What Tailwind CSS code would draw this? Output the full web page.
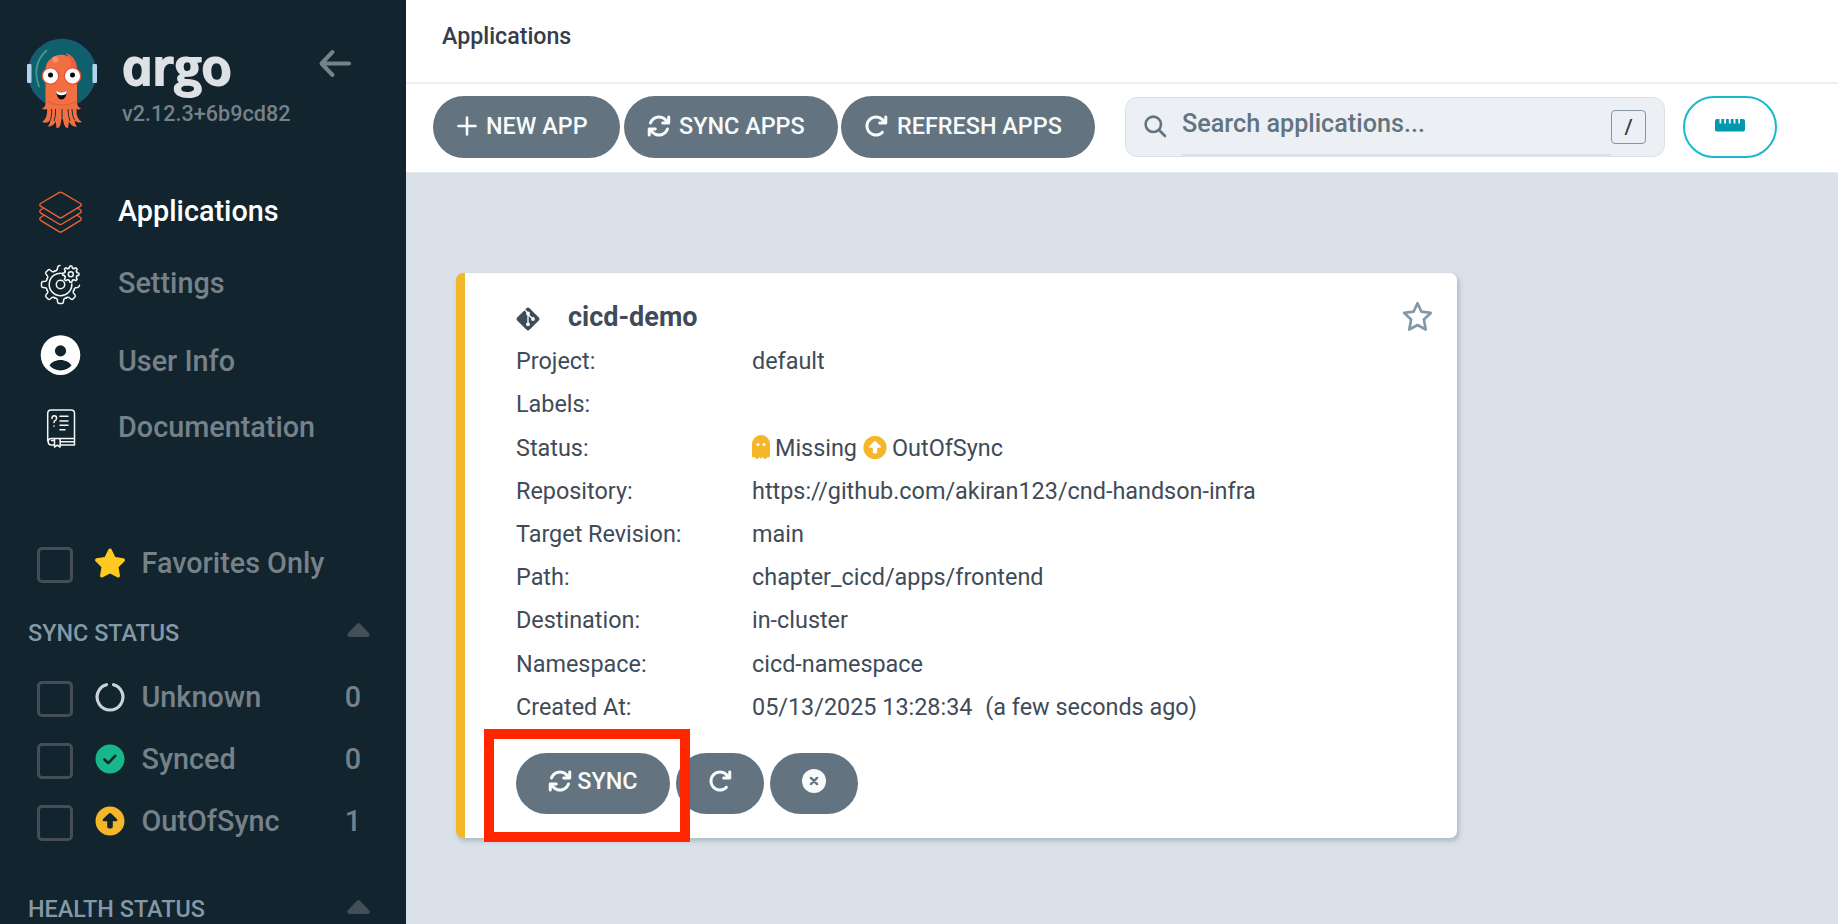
<!DOCTYPE html>
<html lang="en">
<head>
<meta charset="utf-8">
<title>Applications - Argo CD</title>
<script src="https://cdn.jsdelivr.net/npm/@tailwindcss/browser@4"></script>
</head>
<body class="w-[1838px] h-[924px] overflow-hidden flex font-['Roboto',sans-serif] bg-[#dae1e8]">
<svg class="hidden">
  <defs>
    <symbol id="sync" viewBox="0 0 512 512"><path fill="currentColor" d="M105.1 202.6c7.700-21.800 20.200-42.300 37.800-59.800c62.500-62.500 163.800-62.500 226.300 0L386.300 160H336c-17.700 0-32 14.300-32 32s14.300 32 32 32H463.500h.4c17.700 0 32-14.300 32-32V64c0-17.700-14.300-32-32-32s-32 14.300-32 32v51.200L414.400 97.600c-87.500-87.500-229.300-87.500-316.800 0C73.200 122 55.600 150.700 44.800 181.400c-5.900 16.700 2.900 34.900 19.500 40.800s34.900-2.900 40.800-19.500zM39 289.300c-5 1.500-9.800 4.200-13.700 8.200c-4 4-6.700 8.800-8.100 14c-.3 1.200-.6 2.500-.8 3.800c-.3 1.700-.4 3.400-.4 5.100V448c0 17.700 14.300 32 32 32s32-14.300 32-32V396.900l17.600 17.500c87.500 87.400 229.300 87.400 316.700 0c24.400-24.400 42.100-53.100 52.900-83.700c5.900-16.700-2.900-34.900-19.500-40.800s-34.900 2.900-40.800 19.500c-7.700 21.800-20.200 42.300-37.800 59.800c-62.500 62.500-163.800 62.500-226.300 0l-.1-.1L125.600 352H176c17.700 0 32-14.300 32-32s-14.300-32-32-32H48.400c-1.600 0-3.200.1-4.800.3s-3.100.5-4.600 1z"/></symbol>
    <symbol id="refresh" viewBox="0 0 512 512"><path fill="currentColor" d="M386.300 160H336c-17.700 0-32 14.300-32 32s14.300 32 32 32H464c17.700 0 32-14.300 32-32V64c0-17.700-14.300-32-32-32s-32 14.300-32 32v51.200L414.400 97.600c-87.500-87.500-229.300-87.500-316.800 0s-87.500 229.300 0 316.800s229.300 87.500 316.800 0c12.500-12.500 12.500-32.800 0-45.300s-32.800-12.500-45.300 0c-62.500 62.500-163.800 62.500-226.300 0s-62.500-163.800 0-226.300s163.800-62.500 226.300 0L386.300 160z"/></symbol>
    <symbol id="up" viewBox="0 0 30 30"><path fill="#f4b72a" fill-rule="evenodd" d="M15 .5a14.500 14.500 0 1 0 0 29a14.500 14.500 0 0 0 0-29zM15 7q.8 0 1.500.7l5.400 5.400q.7.800.4 1.500q-.3.700-1.200.7H17.800v5.200q0 1.900-1.900 1.900h-1.800q-1.900 0-1.900-1.900v-5.200H8.900q-.9 0-1.200-.7q-.3-.7.400-1.500l5.400-5.400q.7-.7 1.500-.7z"/></symbol>
    <path id="tooth" vector-effect="non-scaling-stroke" d="M-5.700-13.700C-4.700-13.200-3.500-14-3.200-15.200L-2.900-17.600Q-2.700-19-1.400-19H1.400Q2.700-19 2.900-17.600L3.200-15.200C3.500-14 4.700-13.200 5.700-13.700"/>
  </defs>
</svg>

<aside class="w-[406px] h-full shrink-0 bg-[#12242d] flex flex-col text-[28.800px] font-medium text-[#76818a]">
  <div class="h-[176px] shrink-0 flex">
    <svg class="mt-[36px] ml-[26px] w-[72px] h-[96px] shrink-0" viewBox="26 36 72 96">
      <circle cx="62" cy="73" r="33.500" fill="#0e606a" stroke="#24557d" stroke-width="1.500"/>
      <rect x="27" y="64" width="4.500" height="19" rx="1" fill="#b4d3ea"/><rect x="92.500" y="64" width="4.500" height="19" rx="1" fill="#b4d3ea"/>
      <path d="M46.500 50.500Q31 65 39 86.500" fill="none" stroke="#459698" stroke-width="1.800" stroke-linecap="round"/>
      <path d="M45.500 68a16 16 0 0 1 31.500 0V102q0 5 4 6.500q-2 1.500-4.500.5q-.5 10 5.500 13q-4 1.500-7.500-1.500q0 3 2.500 6q-5 1-8-5l-1 6.500q-3 0-4-4l-2-8l-1.500 8.500q-1 4-4 3.500l-.8-6.500q-3 5.500-8 5q2.500-2.500 2.700-6q-4 3.500-8.400 1.500q6-4 5-13q-3 1-5-.5q4-1.500 3.500-6.500z" fill="#f16f41"/>
      <path d="M66 54Q75 60 68 80L77 78V68Q76 56 66 53z" fill="#ec5f3c"/>
      <path d="M51.500 109q1 8-2.500 13.500M55.500 109q.5 7-1.500 12M68 109q0 7 2 12M72 109q0 7 2.500 11M62 109v8" stroke="#12242d" stroke-width=".9" fill="none"/>
      <path d="M47 101.500q15 7 30 0" stroke="#da5d3c" stroke-width="1" fill="none"/>
      <circle cx="55.500" cy="59.500" r="3" fill="#f79274"/>
      <circle cx="50.500" cy="76" r="8.200" fill="#fff" stroke="#e8503a" stroke-width="1.300"/><circle cx="72.500" cy="76" r="8.200" fill="#fff" stroke="#e8503a" stroke-width="1.300"/>
      <circle cx="50.500" cy="75" r="2.500" fill="#090909"/><circle cx="72.500" cy="75" r="2.500" fill="#090909"/>
      <path d="M56 90.500q5.500 4 11 0q-.7 9-5.500 9t-5.500-9z" fill="#0d0d0d"/><path d="M56 90.500q5.500 4 11 0l-.7 3.200q-4.800 3-9.500 0z" fill="#fff"/>
    </svg>
    <div class="ml-[24px] mt-[39px] w-[168px] flex flex-col">
      <div class="h-[60px] w-[100px] leading-[55px] font-['Open_Sans',sans-serif] italic font-semibold text-[50px] tracking-[-0.500px] text-[#dee2e4] origin-left [transform:translateX(-1px)_scaleX(1.070)_skewX(12deg)] [-webkit-text-stroke:2px_#dee2e4] [stroke-linejoin:round]">argo</div>
      <div class="text-[21.600px] leading-[30px] whitespace-nowrap">v2.12.3+6b9cd82</div>
    </div>
    <svg class="ml-[28px] mt-[48px] w-[34px] h-[32px]" viewBox="318 48 34 32" fill="none" stroke="#77828a" stroke-width="4" stroke-linecap="round" stroke-linejoin="round"><path d="M349 63.500H322M332.500 52L321.500 63.500L332.500 75"/></svg>
  </div>

  <nav class="shrink-0 flex flex-col h-[358px]">
    <a class="h-[72px] flex items-center text-white">
      <svg class="ml-[38px] w-[45px] h-[44px]" viewBox="38 190 45 44" fill="none" stroke="#ee6235" stroke-width="1.400" stroke-linejoin="round"><path d="M59 192.700q1.500-.8 3 0L80.500 203.500q1.500 1.300 0 2.600L62 217.300q-1.500.9-3 0L40.500 206.100q-1.500-1.300 0-2.600zM43.500 208L40.500 210q-1.500 1.300 0 2.800L59 224q1.500.9 3 0L80.500 212.800q1.500-1.500 0-2.800L77.500 208M43.500 215.500L40.500 217.500q-1.500 1.300 0 2.800L59 231.600q1.500.9 3 0L80.500 220.300q1.500-1.500 0-2.800L77.500 215.500"/></svg>
      <span class="ml-[35px]">Applications</span>
    </a>
    <a class="h-[72px] flex items-center">
      <svg class="ml-[38px] w-[45px] h-[44px]" viewBox="38 262 45 44" fill="none" stroke="#f5f7f7" stroke-width="1.500" stroke-linecap="round">
        <g transform="translate(60.500 284.500)"><use href="#tooth" transform="rotate(135)"/><use href="#tooth" transform="rotate(180)"/><use href="#tooth" transform="rotate(225)"/><use href="#tooth" transform="rotate(270)"/><use href="#tooth" transform="rotate(315)"/><path d="M-5.700-13.700C-4.700-13.200-3.500-14-3.200-15.200L-2.900-17.100Q-2.500-19-.5-19M13.700 5.700C13.200 4.700 14 3.500 15.200 3.200L17.100 2.900Q19 2.500 19 .8"/><circle r="4.200"/><path d="M3-10.900A11.300 11.300 0 1 0 11.300-.5"/></g>
        <g transform="translate(70.800 274.200) scale(.43)"><use href="#tooth"/><use href="#tooth" transform="rotate(45)"/><use href="#tooth" transform="rotate(90)"/><use href="#tooth" transform="rotate(135)"/><use href="#tooth" transform="rotate(180)"/><use href="#tooth" transform="rotate(225)"/><use href="#tooth" transform="rotate(270)"/><use href="#tooth" transform="rotate(315)"/><circle r="5.800" stroke-width="3.400"/></g>
      </svg>
      <span class="ml-[35px]">Settings</span>
    </a>
    <a class="h-[72px] flex items-center">
      <svg class="ml-[38px] -mt-[2px] w-[45px] h-[44px]" viewBox="38 333 45 44"><path fill="#fff" fill-rule="evenodd" d="M60.500 335.300a19.800 19.800 0 1 0 0 39.600a19.800 19.800 0 0 0 0-39.600zM60.500 345.300a5.600 5.600 0 1 1 0 11.200a5.600 5.600 0 0 1 0-11.200zM60.500 360c5 0 9 2.300 11 5.200c-2.400 3.300-6.600 5.200-11 5.200s-8.600-1.900-11-5.200c2-2.900 6-5.200 11-5.200z"/></svg>
      <span class="ml-[35px] mt-[12px]">User Info</span>
    </a>
    <a class="h-[72px] flex items-center">
      <svg class="ml-[38px] w-[45px] h-[44px]" viewBox="38 406 45 44" fill="none" stroke="#f5f7f7" stroke-width="1.500" stroke-linecap="round" stroke-linejoin="round"><path d="M47.700 441V413.500q0-3.500 3.500-3.500H71q3.500 0 3.500 3.500V438.500H51.500q-3.300 0-3.300 3.200t3.300 3.200H54M60 444.900H74.500V438.500M51.500 440.500h3M61 441.700H74M54.500 439V447l2.800-1.800l2.800 1.800V439M60 416.200h8M60 421h8M60 425.300h8M60 429.700h5M52 418.500q0-2.700 2.300-2.700t2.300 2.500q0 1.700-1.600 2.300q-1 .6-1 1.900M54 426v.2"/></svg>
      <span class="ml-[35px]">Documentation</span>
    </a>
  </nav>

  <div class="h-[62px] shrink-0 flex items-center pl-[37px]">
    <i class="size-[36px] border-[3px] border-[#434e59] rounded-[5px]"></i>
    <svg class="ml-[22px] -mt-[5px] w-[30px] h-[30px]" viewBox="24 0 528 512"><path fill="#ffca20" d="M316.900 18C311.600 7 300.400 0 288.100 0s-23.400 7-28.800 18L195 150.300 51.400 171.500c-12 1.800-22 10.200-25.700 21.700s-.7 24.200 7.900 32.700L137.800 329 113.200 474.700c-2 12 3 24.200 12.900 31.300s23 8 33.800 2.300l128.300-68.500 128.300 68.500c10.800 5.700 23.900 4.900 33.800-2.300s14.900-19.300 12.900-31.300L438.500 329 542.700 225.900c8.600-8.500 11.700-21.200 7.900-32.700s-13.700-19.900-25.700-21.700L381.200 150.300 316.900 18z"/></svg>
    <span class="ml-[16.500px] -mt-[2px]">Favorites Only</span>
  </div>

  <div class="h-[72px] shrink-0 flex items-center justify-between pl-[28px] pr-[36px] text-[23.400px] text-[#8499a8]">
    <span class="mt-[3px]">SYNC STATUS</span>
    <svg class="-mt-[4px] w-[23px] h-[14px]" viewBox="0 0 23 14"><path fill="#434e59" d="M10 .7q1.500-1.200 3 0L22.300 10.500q1.200 3-1.500 3.500H2.200q-2.700-.5-1.500-3.500z"/></svg>
  </div>

  <div class="h-[62px] shrink-0 flex items-center pl-[37px] pr-[46px]">
    <i class="size-[36px] border-[3px] border-[#434e59] rounded-[5px]"></i>
    <svg class="ml-[22px] -mt-[4px] w-[30px] h-[30px]" viewBox="0 0 30 30"><path fill="none" stroke="#c9d4dc" stroke-width="3.200" stroke-linecap="round" d="M18.600 2.700A12.900 12.900 0 1 1 11.400 2.700"/></svg>
    <span class="ml-[16.500px] -mt-[2px] flex-1">Unknown</span><span class="-mt-[2px] -mr-[1px]">0</span>
  </div>
  <div class="h-[62px] shrink-0 flex items-center pl-[37px] pr-[46px]">
    <i class="size-[36px] border-[3px] border-[#434e59] rounded-[5px]"></i>
    <svg class="ml-[22px] -mt-[4px] w-[30px] h-[30px]" viewBox="0 0 30 30"><circle cx="15" cy="15" r="14.500" fill="#18b68b"/><path d="M9.500 15.500l3.700 3.700l7-7.400" fill="none" stroke="#12242d" stroke-width="2.600" stroke-linecap="round" stroke-linejoin="round"/></svg>
    <span class="ml-[16.500px] -mt-[2px] flex-1">Synced</span><span class="-mt-[2px] -mr-[1px]">0</span>
  </div>
  <div class="h-[62px] shrink-0 flex items-center pl-[37px] pr-[46px]">
    <i class="size-[36px] border-[3px] border-[#434e59] rounded-[5px]"></i>
    <svg class="ml-[22px] -mt-[4px] w-[30px] h-[30px]"><use href="#up"/></svg>
    <span class="ml-[16.500px] -mt-[2px] flex-1">OutOfSync</span><span class="-mt-[2px] -mr-[1px]">1</span>
  </div>
  <div class="h-[72px] mt-[18px] shrink-0 flex items-center justify-between pl-[28px] pr-[36px] text-[23.400px] text-[#8499a8]">
    <span class="mt-[3px]">HEALTH STATUS</span>
    <svg class="-mt-[2px] w-[23px] h-[14px]" viewBox="0 0 23 14"><path fill="#434e59" d="M10 .7q1.500-1.200 3 0L22.300 10.500q1.200 3-1.500 3.500H2.200q-2.700-.5-1.500-3.500z"/></svg>
  </div>
</aside>

<main class="flex-1 h-full flex flex-col">
  <header class="h-[84px] shrink-0 bg-white border-b-2 border-[#e9eff4] pl-[36px] text-[23.200px] leading-[73px] font-medium text-[#363c4a]">Applications</header>
  <div class="h-[89px] shrink-0 bg-white border-b border-[#e6ecf0] pl-[27px] pt-[12px] flex items-start text-[23.400px] font-medium text-[#f8fbfb]">
    <button class="w-[187px] h-[62px] rounded-[31px] bg-[#637480] flex items-center pl-[24px] pb-[3px]">
      <svg class="w-[20px] h-[20px]" viewBox="0 0 20 20" stroke="currentColor" stroke-width="2.600" stroke-linecap="round"><path d="M10 1.500v17M1.500 10h17"/></svg><span class="ml-[9px] mt-[2px]">NEW APP</span>
    </button>
    <button class="ml-[4px] w-[214px] h-[62px] rounded-[31px] bg-[#637480] flex items-center pl-[23px] pb-[3px]">
      <svg class="w-[24px] h-[24px]"><use href="#sync"/></svg><span class="ml-[8px] mt-[2px]">SYNC APPS</span>
    </button>
    <button class="ml-[3px] w-[254px] h-[62px] rounded-[31px] bg-[#637480] flex items-center pl-[23px] pb-[3px]">
      <svg class="w-[24px] h-[24px]"><use href="#refresh"/></svg><span class="ml-[9px] mt-[2px]">REFRESH APPS</span>
    </button>
    <div class="ml-[30px] mt-[1px] w-[540px] h-[60px] rounded-[12px] bg-[#ecf0f4] border border-[#dae2e8] flex items-start text-[#627480]">
      <svg class="ml-[18px] mt-[17px] w-[23px] h-[23px]" viewBox="0 0 23 23" fill="none" stroke="currentColor" stroke-width="2.600" stroke-linecap="round"><circle cx="9.300" cy="9.300" r="7.700"/><path d="M15 15l6 6"/></svg>
      <span class="ml-[15px] w-[429px] h-[59px] leading-[52px] text-[25.200px] border-b-3 border-[#dae2e8]">Search applications...</span>
      <kbd class="mt-[12px] w-[35px] h-[34px] border border-[#8296a6] rounded-[4px] font-['Roboto'] text-[21px] font-medium text-[#363c4a] leading-[33px] text-center">/</kbd>
    </div>
    <button class="ml-[18px] w-[94px] h-[62px] rounded-[31px] border-2 border-[#18b8cd] flex justify-center">
      <svg class="mt-[21px] w-[30px] h-[13px]" viewBox="0 0 30 13"><path fill="#009aae" d="M2 0H4.500V4.500H6.300V0H9.200V4.500H11V0H13.900V4.500H15.700V0H18.600V4.500H20.400V0H23.300V4.500H25V0H28Q30 0 30 2V10.500Q30 12.500 28 12.500H2Q0 12.500 0 10.500V2Q0 0 2 0z"/></svg>
    </button>
  </div>

  <article class="relative mt-[100px] ml-[50px] w-[1001px] h-[565px] bg-white rounded-[7px] border-l-9 border-[#f4b72a] shadow-[2px_3px_5px_rgba(90,110,125,0.35)] pl-[51px] text-[23.400px] text-[#3f4b58]">
    <div class="h-[67px] pt-[22px] flex items-start">
      <svg class="mt-[12px] w-[24px] h-[24px]" viewBox="0 0 24 24"><path fill="#3f4b58" d="M10.500 1.200q1.500-1.300 3 0L22.800 10.500q1.300 1.500 0 3L13.500 22.800q-1.500 1.300-3 0L1.200 13.500q-1.300-1.500 0-3z"/><path d="M8.500 2.500L12 6V18M12 7.500L17 12" stroke="#fff" stroke-width="1.300" fill="none"/><circle cx="12" cy="6.500" r="1.900" fill="#fff"/><circle cx="12" cy="17.300" r="1.900" fill="#fff"/><circle cx="17" cy="12" r="1.900" fill="#fff"/></svg>
      <h2 class="ml-[28px] text-[27px] leading-[45px] font-bold">cicd-demo</h2>
      <svg class="ml-auto mr-[24px] mt-[6px] w-[31px] h-[31px]" viewBox="0 0 31 31" fill="none" stroke="#8299a8" stroke-width="2.700" stroke-linejoin="round"><path d="M15.500 2.200L19.400 10.700L28.800 11.900L21.900 18.400L23.700 28.500L15.500 24L7.300 28.500L9.100 18.400L2.200 11.900L11.600 10.700z"/></svg>
    </div>
    <dl class="mt-[0.300px] grid grid-cols-[236px_1fr] auto-rows-[43.200px] leading-[43.200px] whitespace-nowrap">
      <dt>Project:</dt><dd>default</dd>
      <dt>Labels:</dt><dd></dd>
      <dt>Status:</dt>
      <dd class="flex items-start">
        <svg class="mt-[8px] w-[18px] h-[25px]" viewBox="0 0 18 25"><path fill="#f4b72a" d="M0 9a9 9 0 0 1 18 0V22.500l-2-.8l-2.200 2.100q-.8.800-1.600 0L10.500 22L9 24L7.500 22L5.800 23.800q-.8.800-1.600 0L2 21.700l-2 .8z"/><circle cx="6" cy="9.500" r="1.600" fill="#fff"/><circle cx="12" cy="9.500" r="1.600" fill="#fff"/></svg>
        <span class="ml-[5px]">Missing</span>
        <svg class="ml-[6px] mt-[8px] w-[24px] h-[25px]"><use href="#up"/></svg>
        <span class="ml-[5px]">OutOfSync</span>
      </dd>
      <dt>Repository:</dt><dd>https://github.com/akiran123/cnd-handson-infra</dd>
      <dt>Target Revision:</dt><dd>main</dd>
      <dt>Path:</dt><dd>chapter_cicd/apps/frontend</dd>
      <dt>Destination:</dt><dd>in-cluster</dd>
      <dt>Namespace:</dt><dd>cicd-namespace</dd>
      <dt>Created At:</dt><dd>05/13/2025 13:28:34 <span class="ml-[7px]">(a few seconds ago)</span></dd>
    </dl>
    <div class="mt-[24px] flex gap-[6px] text-[#f8fbfb] font-medium">
      <button class="w-[154px] h-[61px] rounded-[30.500px] bg-[#637480] flex items-center justify-center pb-[5px]"><svg class="w-[24px] h-[24px]"><use href="#sync"/></svg><span class="ml-[5px] mt-[2px]">SYNC</span></button>
      <button class="w-[88px] h-[61px] rounded-[30.500px] bg-[#637480] flex items-center justify-center pb-[5px]"><svg class="w-[24px] h-[24px]"><use href="#refresh"/></svg></button>
      <button class="w-[88px] h-[61px] rounded-[30.500px] bg-[#637480] flex items-center justify-center pb-[5px]"><svg class="w-[24px] h-[24px]" viewBox="0 0 24 24"><circle cx="12" cy="12" r="12" fill="#f8fbfb"/><path d="M8.900 8.900l6.200 6.200M15.100 8.900l-6.200 6.200" stroke="#637480" stroke-width="2.400" stroke-linecap="round"/></svg></button>
    </div>
    <div class="absolute left-[19px] top-[456px] w-[206px] h-[113px] border-10 border-[#ff2600]"></div>
  </article>
</main>
</body>
</html>
